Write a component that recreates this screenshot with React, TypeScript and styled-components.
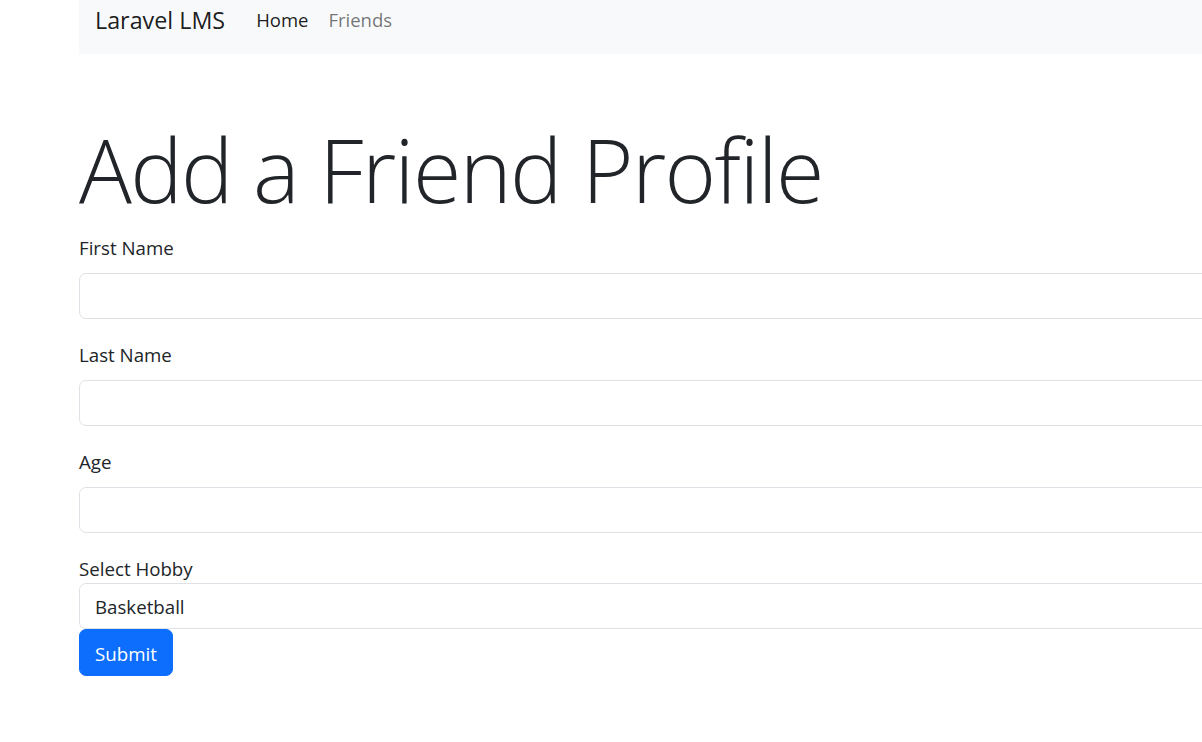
import React from "react";
import styled, { createGlobalStyle } from "styled-components";

const GlobalStyle = createGlobalStyle`
  *, *::before, *::after { box-sizing: border-box; }
  html, body { margin: 0; padding: 0; background: #fff; overflow: hidden; }
  body {
    font-family: "Open Sans", "Noto Sans", sans-serif;
    font-size: 18.7px;
    line-height: 1.5;
    color: #212529;
  }
`;

const Page = styled.div`
  width: 1400px;
  margin-left: 79px;
`;

const Navbar = styled.nav`
  display: flex;
  align-items: flex-start;
  height: 54px;
  background: #f8f9fa;
  padding: 0 16px;
`;

const Brand = styled.a`
  font-size: 23.3px;
  line-height: 34px;
  padding-top: 3px;
  margin-right: 23px;
  color: rgba(0, 0, 0, 0.9);
  text-decoration: none;
`;

const NavList = styled.ul`
  display: flex;
  list-style: none;
  margin: 0;
  padding: 0;
  gap: 4px;
`;

const NavLink = styled.a<{ $active?: boolean }>`
  display: block;
  font-size: 18.5px;
  line-height: 27px;
  padding: 6px 8px 0;
  color: ${(p) => (p.$active ? "rgba(0,0,0,0.9)" : "rgba(0,0,0,0.55)")};
  text-decoration: none;
`;

const Main = styled.main`
  padding-top: 63px;
`;

const Title = styled.h1`
  font-size: 88px;
  font-weight: 300;
  line-height: 1.2;
  letter-spacing: -1.6px;
  margin: 0 0 10px;
  color: #212529;
`;

const Group = styled.div`
  margin-bottom: 21px;
`;

const Label = styled.label<{ $tight?: boolean }>`
  display: block;
  line-height: 29px;
  margin-bottom: ${(p) => (p.$tight ? "0" : "11px")};
`;

const fieldCss = `
  display: block;
  width: 100%;
  height: 46px;
  padding: 3px 15px 0;
  font: inherit;
  font-size: 18.7px;
  color: #212529;
  background: #fff;
  border: 1px solid #dee2e6;
  border-radius: 7px;
  outline: none;
`;

const Input = styled.input`
  ${fieldCss}
`;

const Select = styled.select`
  ${fieldCss}
  appearance: none;
`;

const Button = styled.button`
  display: inline-block;
  height: 47px;
  padding: 3px 15px 0;
  font: inherit;
  font-size: 18.7px;
  color: #fff;
  background: #0d6efd;
  border: 1px solid #0d6efd;
  border-radius: 7px;
  cursor: pointer;
`;

export default function App() {
  return (
    <>
      <GlobalStyle />
      <Page>
        <Navbar>
          <Brand href="#">Laravel LMS</Brand>
          <NavList>
            <li>
              <NavLink href="#" $active>
                Home
              </NavLink>
            </li>
            <li>
              <NavLink href="#">Friends</NavLink>
            </li>
          </NavList>
        </Navbar>
        <Main>
          <Title>Add a Friend Profile</Title>
          <form onSubmit={(e) => e.preventDefault()}>
            <Group>
              <Label htmlFor="first">First Name</Label>
              <Input id="first" type="text" />
            </Group>
            <Group>
              <Label htmlFor="last">Last Name</Label>
              <Input id="last" type="text" />
            </Group>
            <Group>
              <Label htmlFor="age">Age</Label>
              <Input id="age" type="text" />
            </Group>
            <Label htmlFor="hobby" $tight>
              Select Hobby
            </Label>
            <Select id="hobby" defaultValue="basketball">
              <option value="basketball">Basketball</option>
              <option value="football">Football</option>
              <option value="swimming">Swimming</option>
            </Select>
            <Button type="submit">Submit</Button>
          </form>
        </Main>
      </Page>
    </>
  );
}
